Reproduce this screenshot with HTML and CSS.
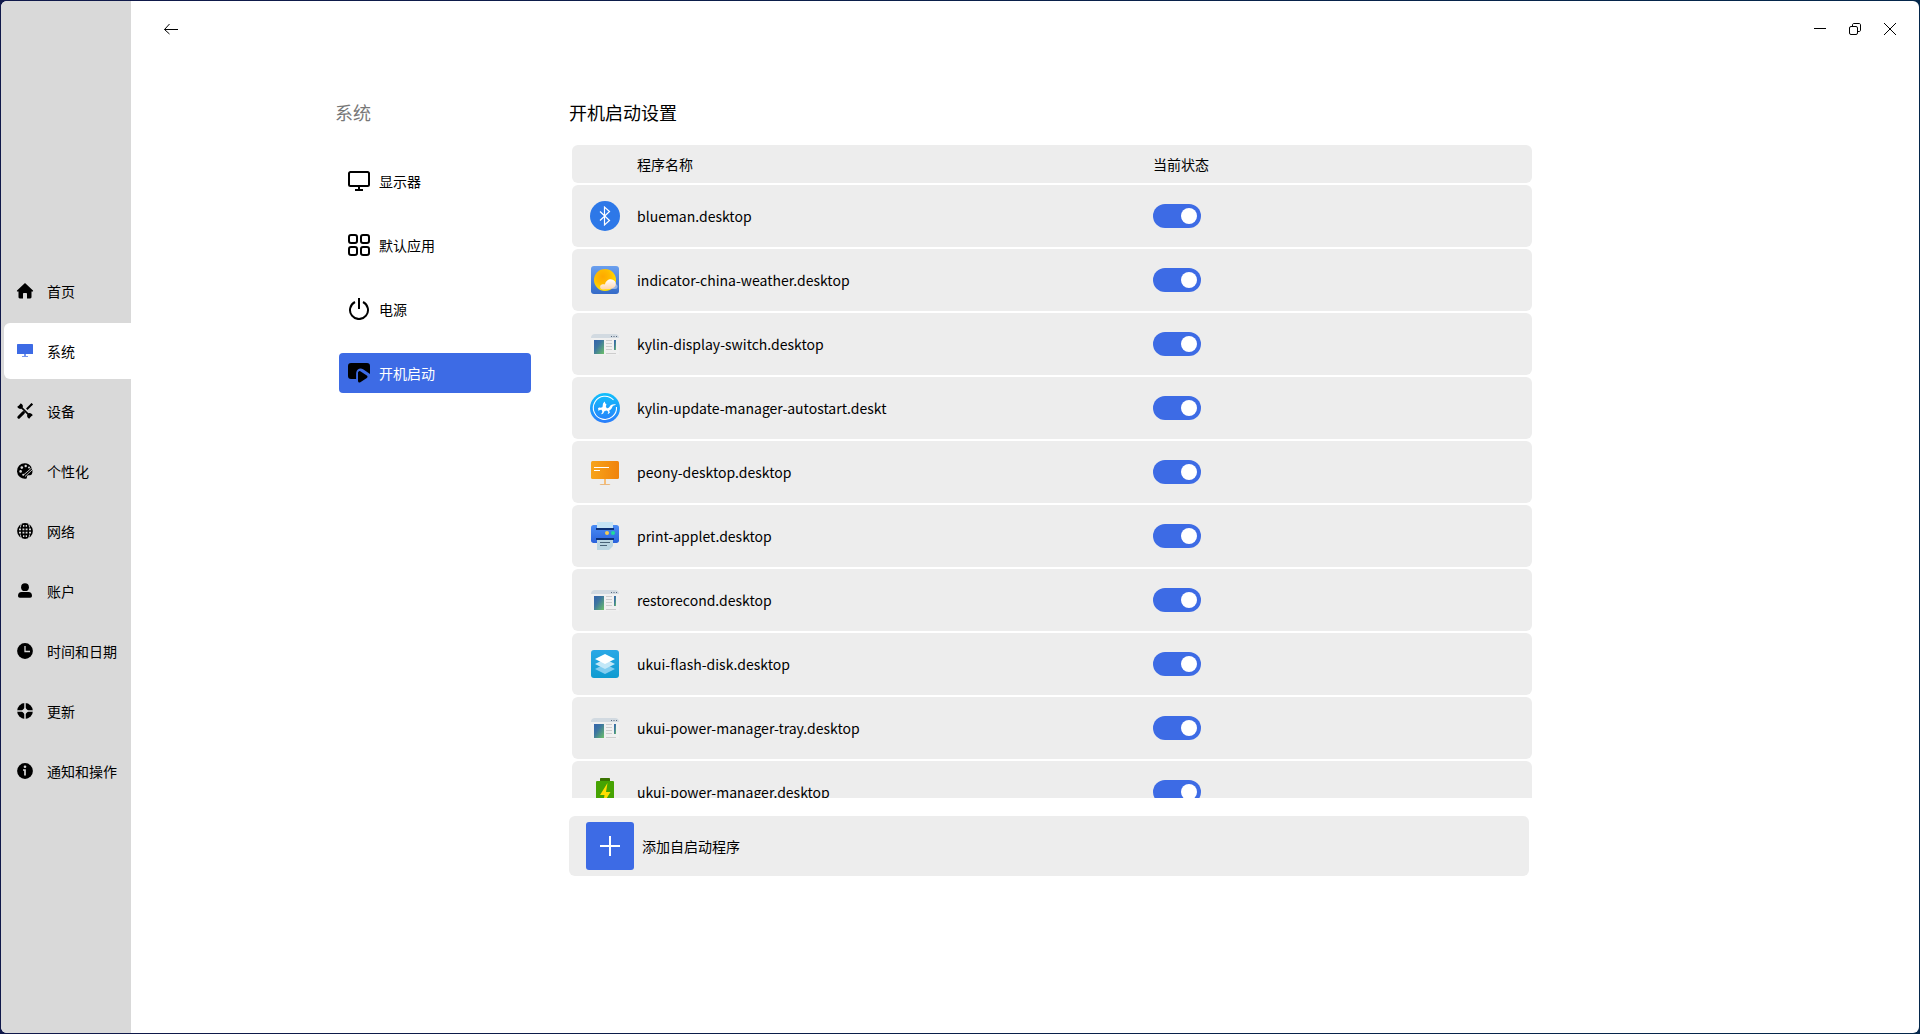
FILE: index.html
```
<!DOCTYPE html>
<html lang="zh-CN">
<head>
<meta charset="utf-8">
<meta name="viewport" content="width=device-width, initial-scale=1">
<title>设置 - 开机启动</title>
<link rel="stylesheet" href="styles.css">
</head>
<body>
<svg class="defs" aria-hidden="true">
  <defs>
    <linearGradient id="g-win" x1="0" y1="0" x2="1" y2="1"><stop offset="0" stop-color="#3463ab"/><stop offset=".4" stop-color="#3d75a0"/><stop offset="1" stop-color="#6cc067"/></linearGradient>
    <linearGradient id="g-weather" x1="0" y1="0" x2="0" y2="1"><stop offset="0" stop-color="#6a9fee"/><stop offset="1" stop-color="#356bc8"/></linearGradient>
    <radialGradient id="g-sun" cx=".4" cy=".35" r=".65"><stop offset="0" stop-color="#ffa800"/><stop offset=".5" stop-color="#ffbb00"/><stop offset="1" stop-color="#ffe200"/></radialGradient>
    <linearGradient id="g-cloud" x1="0" y1="0" x2="0" y2="1"><stop offset="0" stop-color="#fff"/><stop offset="1" stop-color="#ffd3a8"/></linearGradient>
    <linearGradient id="g-kylin" x1="0" y1="0" x2="0" y2="1"><stop offset="0" stop-color="#11c0fb"/><stop offset="1" stop-color="#2a7dfb"/></linearGradient>
    <linearGradient id="g-peony" x1="0" y1="0" x2="1" y2="0"><stop offset="0" stop-color="#f7a41b"/><stop offset="1" stop-color="#f0830d"/></linearGradient>
    <linearGradient id="g-print" x1="0" y1="0" x2="0" y2="1"><stop offset="0" stop-color="#4b8df5"/><stop offset="1" stop-color="#2a62dc"/></linearGradient>
    <linearGradient id="g-flash" x1="0" y1="0" x2="0" y2="1"><stop offset="0" stop-color="#2aa8e6"/><stop offset="1" stop-color="#0f9bd0"/></linearGradient>
  </defs>
  <symbol id="i-window" viewBox="0 0 30 30">
    <path d="M1 9h28v17H1z" fill="#f0f0f0"/>
    <path d="M1 9c0-2.500 1.500-4 4-4h20c2.500 0 4 1.500 4 4z" fill="#d2dae1"/>
    <path d="M21 7h1v1h-1zM23.500 7h1v1h-1zM26 7h1v1h-1z" fill="#56677d"/>
    <path d="M4 11h10v14H4z" fill="url(#g-win)"/><path d="M24 11h2v10h-2z" fill="url(#g-win)"/>
    <path d="M16 11.500h6M16 14.500h6M16 17.500h6M16 20.500h6M16 24.500h10" stroke="#cdcdcd"/>
  </symbol>
</svg>
<div class="window">
  <nav class="sidebar" aria-label="主导航">
    <a class="side-item" href="#home"><svg viewBox="0 0 16 16"><path d="M8 0 16 7.600c.3.600 0 1-.5 1H14.500V14c0 .8-.5 1.400-1.300 1.400H10V11c0-.6-.4-1-1-1H7c-.6 0-1 .4-1 1v4.400H2.800c-.8 0-1.300-.6-1.300-1.400V8.600H.5C0 8.600-.3 8.200 0 7.600z"/></svg>首页</a>
    <a class="side-item active" href="#system" aria-current="page"><svg viewBox="0 0 16 16"><path d="M1 1h14c.6 0 1 .4 1 1v9H0V2c0-.6.4-1 1-1z"/><path d="M7 11h2v2h2v1H5v-1h2z" opacity=".7"/></svg>系统</a>
    <a class="side-item" href="#devices"><svg viewBox="0 0 16 16" fill="none" stroke="currentColor"><path d="M15 1 9.800 6.200" stroke-width="2"/><path d="M14 .8l1.300 1.300" stroke-width="2"/><path d="M6.400 9.600 1.800 14.200" stroke-width="3" stroke-linecap="round"/><path d="M3.800 3.800l8.600 8.600" stroke-width="1.700"/><path d="M3.300.9c1.800.8 2.300 2.600 1.300 3.600S1.700 5.200.9 3.400M12.700 15.100c-1.800-.8-2.300-2.600-1.300-3.600s2.900-.7 3.700 1.100" stroke-width="1.600"/></svg>设备</a>
    <a class="side-item" href="#personal"><svg viewBox="0 0 16 16"><path d="M8 .2a7.800 7.800 0 1 0 1 15.500c1.500-.3.500-2 1.300-2.900 1-1.200 3.300.2 4.500-1.600A7.800 7.800 0 0 0 8 .2z"/><g fill="#d9d9d9"><circle cx="3.600" cy="8.400" r="1.300"/><circle cx="4.800" cy="4.600" r="1.300"/><circle cx="8.700" cy="3" r="1.200"/><circle cx="12" cy="4.400" r="1"/></g><path d="M6.500 12 15.500 4.200M8 13.500 16 6" stroke="#d9d9d9" stroke-width=".9"/><circle cx="6.200" cy="11.700" r="1" fill="#d9d9d9"/></svg>个性化</a>
    <a class="side-item" href="#network"><svg viewBox="0 0 16 16"><circle cx="8" cy="8" r="7.900"/><g class="cut"><path d="M5.500 5.500h5v5h-5zM2 5.500h2v5H2zM12 5.500h2v5h-2zM6 2h4v1.800H6zM6 12.200h4V14H6z" stroke="none" fill="#d9d9d9"/><path d="M4.600.5C3.800 2 3.500 3 3.400 4.500M11.400.5c.8 1.500 1.100 2.500 1.200 4M4.600 15.500C3.800 14 3.500 13 3.400 11.500M11.400 15.500c.8-1.500 1.100-2.500 1.200-4" fill="none" stroke="#d9d9d9" stroke-width=".9"/></g><path d="M1 8h14M8 1v14" stroke="currentColor" stroke-width="1.300"/></svg>网络</a>
    <a class="side-item" href="#account"><svg viewBox="0 0 16 16"><circle cx="8" cy="4.200" r="3.900"/><path d="M4.500 9h7c2.300 0 3.500 1.500 3.500 3.800 0 1.200-.7 1.900-1.800 1.900H2.800c-1.100 0-1.800-.7-1.800-1.900C1 10.500 2.200 9 4.500 9z"/></svg>账户</a>
    <a class="side-item" href="#time"><svg viewBox="0 0 16 16"><circle cx="8" cy="8" r="7.900"/><path d="M8 3v5.500h5" fill="none" stroke="#d9d9d9" stroke-width="1.300"/></svg>时间和日期</a>
    <a class="side-item" href="#update"><svg viewBox="0 0 16 16"><circle cx="8" cy="8" r="7.900"/><path d="M8 0v16M0 8h16" stroke="#d9d9d9" stroke-width="1.500"/><path d="M8 4.500 11.500 8 8 11.500 4.500 8z" fill="#d9d9d9"/></svg>更新</a>
    <a class="side-item" href="#notice"><svg viewBox="0 0 16 16"><circle cx="8" cy="8" r="7.900"/><circle cx="8" cy="3.700" r="1.300" fill="#d9d9d9"/><path d="M6 7h2v5.500M8 7v5.500" stroke="#d9d9d9" stroke-width="1.700" fill="none"/></svg>通知和操作</a>
  </nav>

  <main class="main">
    <header class="titlebar">
      <button class="tool" type="button" aria-label="返回"><svg viewBox="0 0 16 16"><path d="M1.500 8.500H15M6.500 3 1.500 8.500 6.500 13"/></svg></button>
      <div class="controls">
        <button class="tool" type="button" aria-label="最小化"><svg viewBox="0 0 16 16"><path d="M2 7.500h12"/></svg></button>
        <button class="tool" type="button" aria-label="还原"><svg viewBox="0 0 16 16"><rect x="2.500" y="5.500" width="8" height="8" rx="1.500"/><path d="M5.500 5.500V4c0-1 .5-1.500 1.500-1.500h5c1 0 1.500.5 1.500 1.500v5c0 1-.5 1.500-1.500 1.500h-1.500"/></svg></button>
        <button class="tool" type="button" aria-label="关闭"><svg viewBox="0 0 16 16"><path d="M2 2l12 12M14 2 2 14"/></svg></button>
      </div>
    </header>

    <div class="content">
      <section class="subnav">
        <h2 class="heading muted">系统</h2>
        <nav class="sub-list" aria-label="系统">
          <a class="sub-item" href="#display"><svg viewBox="0 0 22 22"><path d="M2.500 2h17c.8 0 1.500.7 1.500 1.500v11c0 .8-.7 1.500-1.500 1.500h-17C1.700 16 1 15.300 1 14.500v-11C1 2.700 1.700 2 2.500 2zM11 16v4M7 20h8"/></svg>显示器</a>
          <a class="sub-item" href="#defaults"><svg viewBox="0 0 22 22"><rect x="1" y="1" width="8" height="8" rx="2"/><rect x="13" y="1" width="8" height="8" rx="2"/><rect x="1" y="13" width="8" height="8" rx="2"/><rect x="13" y="13" width="8" height="8" rx="2"/></svg>默认应用</a>
          <a class="sub-item" href="#power"><svg viewBox="0 0 22 22"><path d="M11 0v11M7 4a9 9 0 1 0 8 0"/></svg>电源</a>
          <a class="sub-item active" href="#autostart" aria-current="page"><svg viewBox="0 0 22 22"><path d="M3 1h16a3 3 0 0 1 3 3v8l-6.500-4.600C12.500 5.500 9 6.500 8.500 10v7H3a3 3 0 0 1-3-3V4a3 3 0 0 1 3-3z" fill="#000" stroke="none"/><path d="M11.500 10.500v8.500l6.500-4.300z" fill="#000" stroke="#000" stroke-width="3" stroke-linejoin="round"/><path d="M8.800 17v-5c0-3.500 3-4.700 5.700-3l6 4.200" stroke="#3d6be5" stroke-width="1.200"/></svg>开机启动</a>
        </nav>
      </section>

      <section class="panel">
        <h1 class="heading">开机启动设置</h1>
        <div class="list">
          <table class="apps">
            <thead>
              <tr><th class="col-icon"></th><th class="col-name" scope="col">程序名称</th><th scope="col">当前状态</th></tr>
            </thead>
            <tbody>
              <tr><td class="col-icon"><svg viewBox="0 0 30 30"><circle cx="15" cy="15" r="15" fill="#2d78e8"/><path d="M10 10.500 19.500 19.500 14.500 24V6l5 4.500L10 19.500" fill="none" stroke="#fff" stroke-width="1.200"/></svg></td><td><label for="t1">blueman.desktop</label></td><td><input class="switch" id="t1" type="checkbox" checked></td></tr>
              <tr><td class="col-icon"><svg viewBox="0 0 30 30"><rect x="1" y="1" width="28" height="28" rx="3" fill="url(#g-weather)"/><circle cx="15" cy="15" r="11" fill="url(#g-sun)"/><path d="M23 19h2a2.500 2.500 0 0 1 0 5h-4z" fill="#a9c3ec" opacity=".8"/><path d="M13 24.500c-3.500 0-4-4.500-.5-5.200 1-.2 2 0 2.500.3.500-3.500 3.500-5.500 6.500-5.200 4 .5 5.500 4.500 3.500 7.200-1.500 2-5 2.900-12 2.900z" fill="url(#g-cloud)"/></svg></td><td><label for="t2">indicator-china-weather.desktop</label></td><td><input class="switch" id="t2" type="checkbox" checked></td></tr>
              <tr><td class="col-icon"><svg><use href="#i-window"/></svg></td><td><label for="t3">kylin-display-switch.desktop</label></td><td><input class="switch" id="t3" type="checkbox" checked></td></tr>
              <tr><td class="col-icon"><svg viewBox="0 0 30 30"><circle cx="15" cy="15" r="15" fill="url(#g-kylin)"/><path d="M23.500 7A11.600 11.600 0 1 0 26.500 14" fill="none" stroke="#fff" stroke-width="1.100"/><path d="M8 15.200c.8-.8 1.500-.8 2.500-.4l1.800-.6c.8-1.200.2-3 1-4.200l1.500-1.500.4 1.700 1.300 1.300-.7 1.700.8 1.800c1 .6 2.400 0 3-1.200.8-1.800 2.400-2.800 6.400-2.300-.8.8-2 .8-2.800 1.300-1.200.8-.9 2.500-2.500 3.700-1 .6-1.300.8-1.500 1.500l.8 1.400-1.800 1.700-.5-.5.7-1.500-1.500-1.500-2.300.5-1.600 2.600-2 .6 1.400-2.200-.8-2.400-2 .2-1 1.200z" fill="#fff"/></svg></td><td><label for="t4">kylin-update-manager-autostart.deskt</label></td><td><input class="switch" id="t4" type="checkbox" checked></td></tr>
              <tr><td class="col-icon"><svg viewBox="0 0 30 30"><path d="M14 21h2v6h-2z" fill="#f7bd75"/><path d="M10 28c-.5 0-.5-1 1-1h8c1.500 0 1.500 1 1 1z" fill="#e8b77d"/><rect x="1" y="4" width="28" height="18" rx="1.500" fill="url(#g-peony)"/><path d="M4 10.500h15M4 13.500h6" stroke="#fff" stroke-width="1.200"/></svg></td><td><label for="t5">peony-desktop.desktop</label></td><td><input class="switch" id="t5" type="checkbox" checked></td></tr>
              <tr><td class="col-icon"><svg viewBox="0 0 30 30"><path d="M1 6.500C1 5 2 4 3.500 4h23C28 4 29 5 29 6.500v13c0 1.500-1 2.500-2.500 2.500h-23C2 22 1 21 1 19.500z" fill="url(#g-print)"/><path d="M7 1h16v6H7z" fill="#c5e4f5"/><path d="M6 7h18v2H6zM6 17h18v2H6z" fill="#0c3175"/><circle cx="17" cy="12" r="2" fill="#f5cb55"/><circle cx="23" cy="12" r="2" fill="#21dc9b"/><path d="M7 19h16v6l-4 4H7z" fill="#bbd6e2"/><path d="M10 21.500h10M10 24.500h7" stroke="#496377"/></svg></td><td><label for="t6">print-applet.desktop</label></td><td><input class="switch" id="t6" type="checkbox" checked></td></tr>
              <tr><td class="col-icon"><svg><use href="#i-window"/></svg></td><td><label for="t7">restorecond.desktop</label></td><td><input class="switch" id="t7" type="checkbox" checked></td></tr>
              <tr><td class="col-icon"><svg viewBox="0 0 30 30"><rect x="1" y="1" width="28" height="28" rx="3" fill="url(#g-flash)"/><path d="M5 20l10-5 10 5-10 5z" fill="#83cdef"/><path d="M5 15l10-5 10 5-10 5z" fill="#c3e8f8"/><path d="M5 10l10-5 10 5-10 5z" fill="#fff"/></svg></td><td><label for="t8">ukui-flash-disk.desktop</label></td><td><input class="switch" id="t8" type="checkbox" checked></td></tr>
              <tr><td class="col-icon"><svg><use href="#i-window"/></svg></td><td><label for="t9">ukui-power-manager-tray.desktop</label></td><td><input class="switch" id="t9" type="checkbox" checked></td></tr>
              <tr><td class="col-icon"><svg viewBox="0 0 30 30"><path d="M10 4V2c0-.6.400-1 1-1h8c.6 0 1 .4 1 1v2z" fill="#3a7300"/><rect x="6" y="4" width="18" height="25" rx="1" fill="#46a302"/><path d="M17.500 6 10 18h4.500L13 27l7.500-12H16z" fill="#ffde00"/></svg></td><td><label for="t10">ukui-power-manager.desktop</label></td><td><input class="switch" id="t10" type="checkbox" checked></td></tr>
            </tbody>
          </table>
        </div>
        <div class="add-bar">
          <button class="add-button" id="add" type="button" aria-labelledby="add-label"><svg viewBox="0 0 20 20"><path d="M0 10h20M10 0v20"/></svg></button>
          <label id="add-label" for="add">添加自启动程序</label>
        </div>
      </section>
    </div>
  </main>
</div>
</body>
</html>
```
FILE: styles.css
```
* { box-sizing: border-box; }

:root {
  --accent: #3d6be5;
  --sidebar: #d9d9d9;
  --card: #ededed;
}

body {
  margin: 0;
  height: 100vh;
  padding: 1px;
  background: linear-gradient(to right, #10184a, #04274b);
  color: #000;
  font: 14px/20px "Noto Sans CJK SC", sans-serif;
}

a { color: inherit; text-decoration: none; }

button { margin: 0; padding: 0; border: 0; color: inherit; font: inherit; }

svg { display: block; flex: none; fill: currentColor; }

.defs { position: absolute; width: 0; height: 0; }

.window {
  display: flex;
  height: 100%;
  overflow: hidden;
  border-radius: 6px;
  background: #fff;
}

/* Main navigation */
.sidebar {
  display: flex;
  flex: none;
  flex-direction: column;
  justify-content: center;
  gap: 4px;
  width: 130px;
  padding: 28px 0 0 3px;
  background: var(--sidebar);
}

.side-item {
  display: flex;
  align-items: center;
  gap: 14px;
  height: 56px;
  padding-left: 13px;
  border-radius: 6px 0 0 6px;
  white-space: nowrap;
}

.side-item svg { width: 16px; height: 16px; overflow: visible; }
.side-item.active { background: #fff; }
.side-item.active svg { color: var(--accent); }

/* Title bar */
.main { flex: 1; min-width: 0; }

.titlebar {
  display: flex;
  align-items: center;
  justify-content: space-between;
  height: 56px;
  padding: 0 14px 0 25px;
}

.controls { display: flex; gap: 5px; }

.tool {
  display: grid;
  place-items: center;
  width: 30px;
  height: 30px;
  background: none;
}

.tool svg { width: 16px; height: 16px; fill: none; stroke: currentColor; }

/* Page content */
.content {
  display: grid;
  grid-template-columns: 196px minmax(0, 963px);
  gap: 38px;
  padding: 40px 24px 24px 204px;
}

.heading {
  margin: 0;
  font-size: 18px;
  font-weight: 400;
  line-height: 30px;
}

.muted { color: #777; }

.sub-list {
  display: flex;
  flex-direction: column;
  gap: 24px;
  margin: 34px 0 0 4px;
}

.sub-item {
  display: flex;
  align-items: center;
  gap: 9px;
  height: 40px;
  padding-left: 9px;
  border-radius: 4px;
}

.sub-item svg { width: 22px; height: 22px; fill: none; stroke: currentColor; stroke-width: 2; }
.sub-item.active { background: var(--accent); color: #fff; }

/* Startup program list */
.list {
  max-height: 655px;
  margin: 16px 0 0 3px;
  overflow-y: auto;
  scrollbar-width: none;
}

.apps {
  width: 100%;
  border-spacing: 0 2px;
  table-layout: fixed;
}

.apps th, .apps td {
  padding: 0;
  background: var(--card);
  font-weight: 400;
  text-align: left;
}

.apps th { height: 38px; }
.apps td { height: 62px; }
.apps tr > :first-child { border-radius: 6px 0 0 6px; }
.apps tr > :last-child { border-radius: 0 6px 6px 0; }
.apps .col-icon { width: 65px; padding-left: 18px; }
.apps .col-name { width: 516px; }
.apps svg { width: 30px; height: 30px; }

.switch {
  display: flex;
  align-items: center;
  justify-content: flex-end;
  width: 48px;
  height: 24px;
  margin: 0;
  padding: 4px;
  border-radius: 12px;
  background: var(--accent);
  appearance: none;
}

.switch::before {
  width: 16px;
  height: 16px;
  border-radius: 50%;
  background: #fff;
  content: "";
}

.switch:not(:checked) { justify-content: flex-start; background: #b5b5b5; }

.add-bar {
  display: flex;
  align-items: center;
  gap: 8px;
  height: 60px;
  margin: 18px 3px 0 0;
  padding-left: 17px;
  border-radius: 6px;
  background: var(--card);
}

.add-button {
  display: grid;
  place-items: center;
  width: 48px;
  height: 48px;
  border-radius: 3px;
  background: var(--accent);
  color: #fff;
}

.add-button svg { width: 20px; height: 20px; stroke: currentColor; stroke-width: 2; }
```
